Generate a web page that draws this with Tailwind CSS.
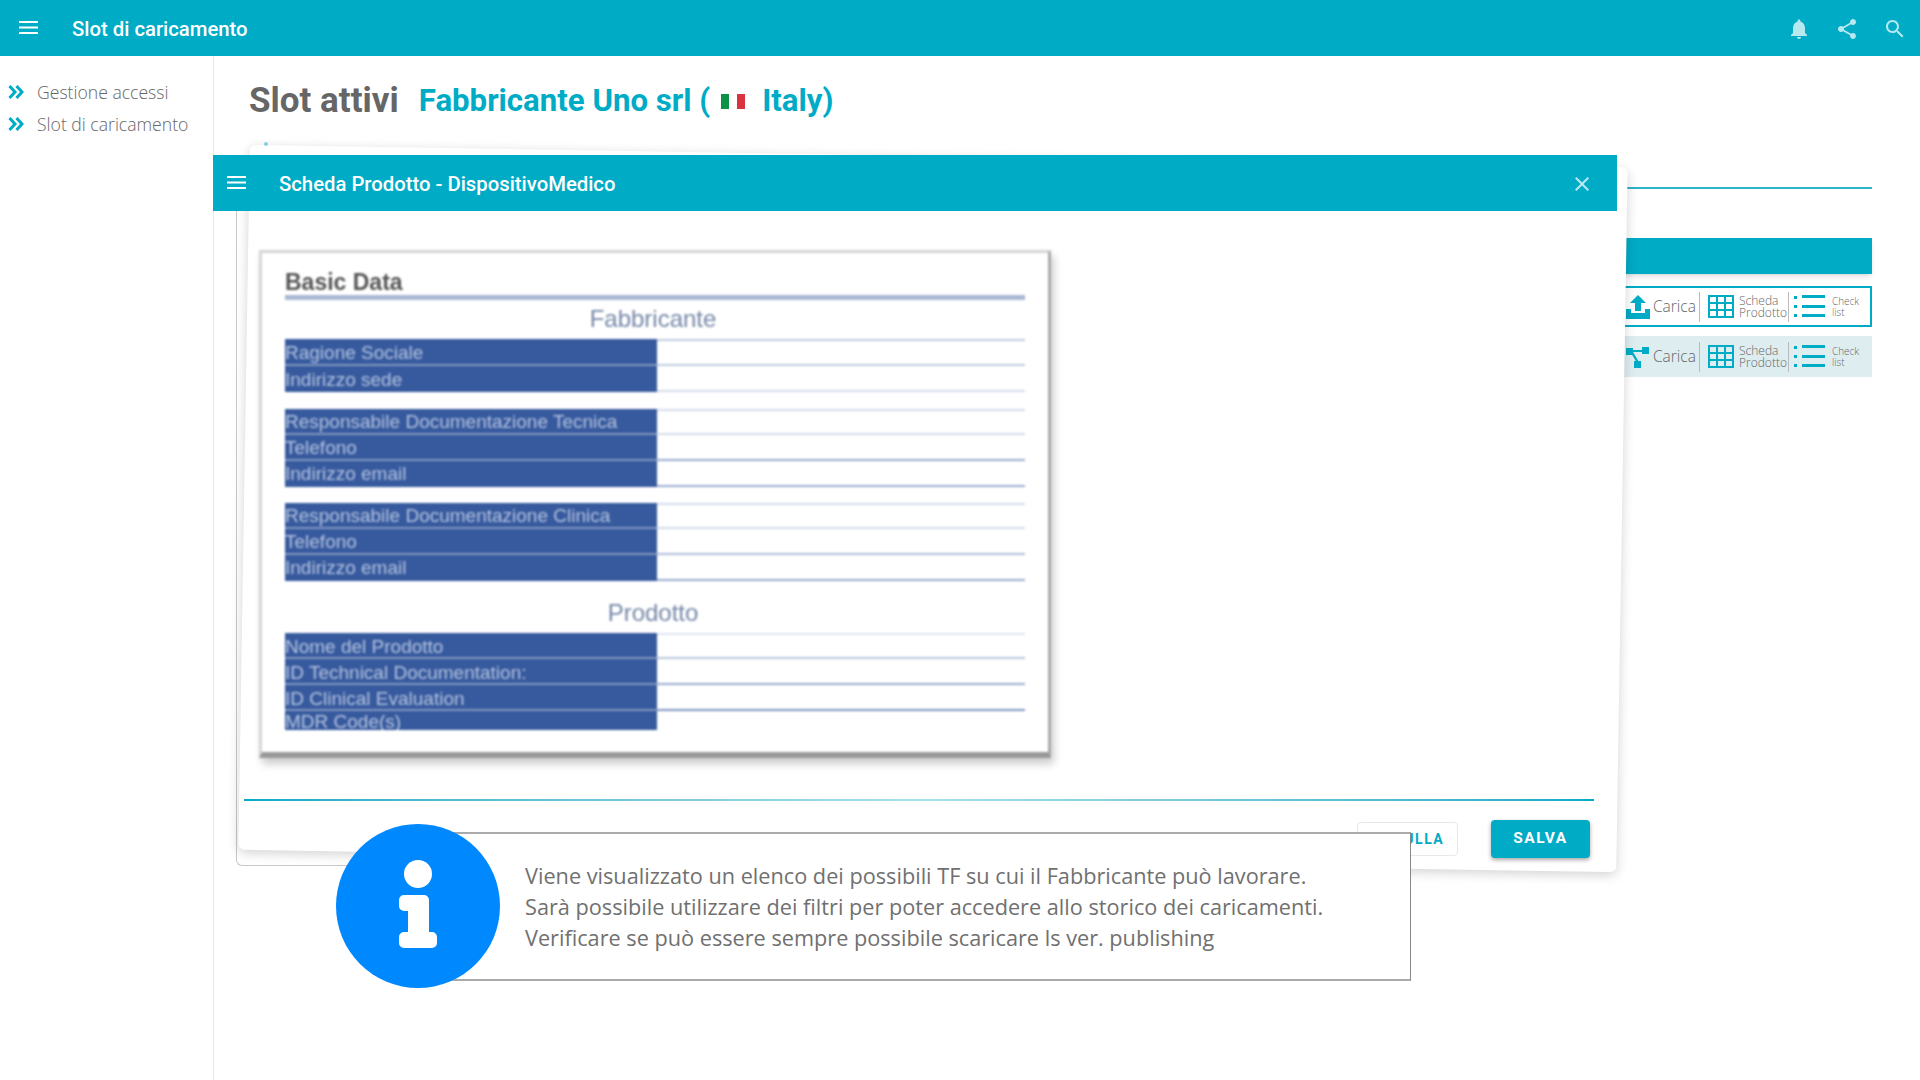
<!DOCTYPE html>
<html lang="it">
<head>
  <meta charset="UTF-8" />
  <title>Slot di caricamento</title>
  <script src="https://cdn.jsdelivr.net/npm/@tailwindcss/browser@4"></script>
</head>
<body class="relative h-screen overflow-hidden bg-white text-[#666] font-['Roboto',sans-serif]">

  <!-- Header -->
  <header class="h-14 bg-[#00abc6] flex items-center text-white">
    <svg class="ml-[19px] w-[19px] h-[13px] mt-[-2px]" viewBox="0 0 19 13" fill="#fff"><path d="M0 0h19v2H0zM0 5.5h19v2H0zM0 11h19v2H0z"/></svg>
    <span class="ml-[34px] mt-[2px] text-[20.3px] font-medium">Slot di caricamento</span>
    <div class="ml-auto mr-[13px] mt-[1px] flex gap-6 text-[#b9e9f0]">
      <svg class="w-6 h-6" viewBox="0 0 24 24" fill="currentColor"><path d="M12 22c1.1 0 2-.9 2-2h-4c0 1.1.89 2 2 2zm6-6v-5c0-3.07-1.64-5.64-4.5-6.32V4c0-.83-.67-1.5-1.5-1.5s-1.5.67-1.5 1.5v.68C7.63 5.36 6 7.92 6 11v5l-2 2v1h16v-1l-2-2z"/></svg>
      <svg class="w-6 h-6" viewBox="0 0 24 24" fill="currentColor"><path d="M18 16.08c-.76 0-1.44.3-1.96.77L8.91 12.7c.05-.23.09-.46.09-.7s-.04-.47-.09-.7l7.05-4.11c.54.5 1.25.81 2.04.81 1.66 0 3-1.34 3-3s-1.34-3-3-3-3 1.34-3 3c0 .24.04.47.09.7L8.04 9.81C7.5 9.31 6.79 9 6 9c-1.66 0-3 1.34-3 3s1.34 3 3 3c.79 0 1.5-.31 2.04-.81l7.12 4.16c-.05.21-.08.43-.08.65 0 1.61 1.31 2.92 2.92 2.92 1.61 0 2.92-1.31 2.92-2.92s-1.31-2.92-2.92-2.92z"/></svg>
      <svg class="w-6 h-6" viewBox="0 0 24 24" fill="currentColor"><path d="M15.5 14h-.79l-.28-.27C15.41 12.59 16 11.11 16 9.5 16 5.91 13.09 3 9.5 3S3 5.91 3 9.5 5.91 16 9.5 16c1.61 0 3.09-.59 4.23-1.57l.27.28v.79l5 4.99L20.49 19l-4.99-5zm-6 0C7.01 14 5 11.99 5 9.5S7.01 5 9.5 5 14 7.01 14 9.5 11.99 14 9.5 14z"/></svg>
    </div>
  </header>

  <div class="flex h-[1024px]">
    <!-- Sidebar -->
    <aside class="w-[214px] shrink-0 border-r border-[#e8e8e8] pt-[20px] font-['Open_Sans',sans-serif] font-light text-[17.6px] text-[#666]">
      <div class="flex items-center h-8">
        <svg class="ml-2 w-[16px] h-[14px]" viewBox="0 0 16 14" fill="none" stroke="#00abc6" stroke-width="3"><path d="M1.5 1l5.5 6-5.5 6M8.5 1l5.5 6-5.5 6"/></svg>
        <span class="ml-[13px]">Gestione accessi</span>
      </div>
      <div class="flex items-center h-8">
        <svg class="ml-2 w-[16px] h-[14px]" viewBox="0 0 16 14" fill="none" stroke="#00abc6" stroke-width="3"><path d="M1.5 1l5.5 6-5.5 6M8.5 1l5.5 6-5.5 6"/></svg>
        <span class="ml-[13px]">Slot di caricamento</span>
      </div>
    </aside>

    <!-- Main -->
    <main class="flex-1 pl-[35px] pr-12 pt-[24px]">
      <div class="flex items-center h-[42px] font-bold">
        <span class="text-[35px] text-[#666]">Slot attivi</span>
        <span class="ml-5 text-[31.2px] text-[#00abc6] flex items-center">Fabbricante Uno srl (
          <span class="ml-[11px] mr-[17px] flex w-6 h-[15px]"><span class="flex-1 bg-[#0b9247]"></span><span class="flex-1 bg-white"></span><span class="flex-1 bg-[#d8333f]"></span></span>
          Italy)</span>
      </div>
      <div class="mt-[65px] h-[2px] bg-[#2fb3c9]"></div>
      <div class="mt-[49px] h-9 bg-[#00abc6] shadow-md"></div>

      <div class="mt-3 h-[41px] border-2 border-[#00abc6] flex items-center justify-end font-['Open_Sans',sans-serif] font-light text-[#666]">
        <svg class="w-6 h-6 mr-[3px]" viewBox="0 0 24 24" fill="#00abc6"><path d="M12 0l8 8h-5v8H9V8H4zM0 14h5v4h14v-4h5v10H0z"/></svg>
        <span class="text-[15.5px] w-[46px]">Carica</span>
        <div class="w-px h-[30px] bg-[#bbb] mr-[8px]"></div>
        <svg class="w-[26px] h-[23px] mr-[5px]" viewBox="0 0 26 23" fill="none" stroke="#00abc6" stroke-width="2"><path d="M1 1h24v21H1zM1 8h24M1 15h24M9 1v21M17 1v21"/></svg>
        <span class="text-[12px] leading-[12px] w-[49px]">Scheda Prodotto</span>
        <div class="w-px h-[30px] bg-[#bbb] mr-[5px]"></div>
        <svg class="w-[31px] h-[23px] mr-[7px]" viewBox="0 0 31 23" fill="#00abc6"><path d="M0 1h3v3H0zM0 10h3v3H0zM0 19h3v3H0zM8 0h23v3H8zM8 10h23v3H8zM8 19h23v3H8z"/></svg>
        <span class="text-[10px] leading-[11px] w-[38px]">Check list</span>
      </div>

      <div class="mt-[9px] h-[41px] bg-[#deedf0] flex items-center justify-end font-['Open_Sans',sans-serif] font-light text-[#666] px-[2px]">
        <svg class="w-6 h-6 mr-[3px]" viewBox="0 0 24 24" fill="#00abc6"><path d="M0 3h7v7H0zM16 2h7v7h-7zM8 16h7v7H8z"/><path d="M6 5h11v2H6zM5 8l2-1 6 10-2 1z"/></svg>
        <span class="text-[15.5px] w-[46px]">Carica</span>
        <div class="w-px h-[30px] bg-[#bbb] mr-[8px]"></div>
        <svg class="w-[26px] h-[23px] mr-[5px]" viewBox="0 0 26 23" fill="none" stroke="#00abc6" stroke-width="2"><path d="M1 1h24v21H1zM1 8h24M1 15h24M9 1v21M17 1v21"/></svg>
        <span class="text-[12px] leading-[12px] w-[49px]">Scheda Prodotto</span>
        <div class="w-px h-[30px] bg-[#bbb] mr-[5px]"></div>
        <svg class="w-[31px] h-[23px] mr-[7px]" viewBox="0 0 31 23" fill="#00abc6"><path d="M0 1h3v3H0zM0 10h3v3H0zM0 19h3v3H0zM8 0h23v3H8zM8 10h23v3H8zM8 19h23v3H8z"/></svg>
        <span class="text-[10px] leading-[11px] w-[38px]">Check list</span>
      </div>
    </main>
  </div>

  <!-- Modal, caught mid-animation: back cards are slightly rotated -->
  <div class="absolute left-[236px] top-[211px] w-[300px] h-[655px] border-l border-b border-[#c8c8c8] rounded-bl-md bg-white"></div>
  <div class="absolute left-[244px] top-[156px] w-[1378px] h-[705px] rotate-[0.93deg] rounded-md bg-white shadow-[0_3px_12px_rgba(0,0,0,0.18)]"></div>
  <div class="absolute left-[264px] top-[142px] w-[4px] h-[4px] rounded-full bg-[#7fd3e1]"></div>

  <div class="absolute left-[213px] top-[155px] w-[1404px] flex flex-col">
    <div class="h-14 bg-[#00abc6] flex items-center text-white">
      <svg class="ml-[14px] w-[19px] h-[13px] mt-[-2px]" viewBox="0 0 19 13" fill="#fff"><path d="M0 0h19v2H0zM0 5.5h19v2H0zM0 11h19v2H0z"/></svg>
      <span class="ml-[33px] mt-[3px] text-[20.3px] font-medium">Scheda Prodotto - DispositivoMedico</span>
      <svg class="ml-auto mr-[23px] mt-[2px] w-6 h-6 text-[#b9e9f0]" viewBox="0 0 24 24" fill="currentColor"><path d="M19 6.41L17.59 5 12 10.59 6.41 5 5 6.41 10.59 12 5 17.59 6.41 19 12 13.41 17.59 19 19 17.59 13.41 12z"/></svg>
    </div>

    <!-- Blurred document picture -->
    <div class="ml-[46px] mt-[39px] w-[792px] h-[508px] bg-white border-[3px] border-[#d6d6d6] border-r-[#aaa] border-b-[6px] border-b-[#999] shadow-[3px_6px_8px_rgba(0,0,0,0.2)] px-[23px] blur-[1.1px] font-['Liberation_Sans',sans-serif] text-[19px] text-[#b4c3df]">
      <div class="h-[47px] flex items-end pb-[1px] border-b-[5px] border-[#a9b8d4] text-[23px] font-bold text-[#555]"><span class="leading-none">Basic Data</span></div>
      <div class="h-[39px] pr-[4px] pb-[2px] flex items-center justify-center text-[24px] text-[#7587a8]">Fabbricante</div>

      <div class="flex flex-col">
        <div class="flex h-[27px]"><div class="w-[372px] bg-[#375a9e] border-b-2 border-[#8096c0] leading-[27px]">Ragione Sociale</div><div class="flex-1 border-y-2 border-[#c0cce2]"></div></div>
        <div class="flex h-[26px]"><div class="w-[372px] bg-[#375a9e] leading-[27px]">Indirizzo sede</div><div class="flex-1 border-b-2 border-[#d5dcea]"></div></div>
      </div>
      <div class="flex flex-col mt-[17px]">
        <div class="flex h-[26px]"><div class="w-[372px] bg-[#375a9e] border-b-2 border-[#8096c0] leading-[25px]">Responsabile Documentazione Tecnica</div><div class="flex-1 border-y-2 border-[#d5dcea]"></div></div>
        <div class="flex h-[26px]"><div class="w-[372px] bg-[#375a9e] border-b-2 border-[#8096c0] leading-[25px]">Telefono</div><div class="flex-1 border-b-2 border-[#9cadcf]"></div></div>
        <div class="flex h-[26px]"><div class="w-[372px] bg-[#375a9e] leading-[26px]">Indirizzo email</div><div class="flex-1 border-b-2 border-[#9cadcf]"></div></div>
      </div>
      <div class="flex flex-col mt-[16px]">
        <div class="flex h-[26px]"><div class="w-[372px] bg-[#375a9e] border-b-2 border-[#8096c0] leading-[25px]">Responsabile Documentazione Clinica</div><div class="flex-1 border-y-2 border-[#d5dcea]"></div></div>
        <div class="flex h-[26px]"><div class="w-[372px] bg-[#375a9e] border-b-2 border-[#8096c0] leading-[25px]">Telefono</div><div class="flex-1 border-b-2 border-[#aebddb]"></div></div>
        <div class="flex h-[26px]"><div class="w-[372px] bg-[#375a9e] leading-[26px]">Indirizzo email</div><div class="flex-1 border-b-2 border-[#9cadcf]"></div></div>
      </div>
      <div class="h-[52px] pt-3 pr-[4px] flex items-center justify-center text-[24px] text-[#7587a8]">Prodotto</div>
      <div class="flex flex-col">
        <div class="flex h-[26px]"><div class="w-[372px] bg-[#375a9e] border-b-2 border-[#8096c0] leading-[27px]">Nome del Prodotto</div><div class="flex-1 border-y-2 border-[#dfe4ef] border-b-[#b9c6df]"></div></div>
        <div class="flex h-[26px]"><div class="w-[372px] bg-[#375a9e] border-b-2 border-[#8096c0] leading-[27px]">ID Technical Documentation:</div><div class="flex-1 border-b-2 border-[#9cadcf]"></div></div>
        <div class="flex h-[26px]"><div class="w-[372px] bg-[#375a9e] border-b-2 border-[#8096c0] leading-[27px]">ID Clinical Evaluation</div><div class="flex-1 border-b-2 border-[#7f96c3]"></div></div>
        <div class="flex h-[19px] overflow-hidden"><div class="w-[372px] bg-[#375a9e] leading-[22px]">MDR Code(s)</div></div>
      </div>
    </div>

    <!-- Footer of the modal -->
    <div class="ml-[31px] mr-[23px] mt-[41px] h-[2px] bg-linear-to-r from-[#00abc6] via-[#a6e0ea] to-[#00abc6]"></div>
    <div class="mt-[19px] flex justify-end items-center mr-[27px] gap-[33px]">
      <button class="w-[101px] h-[34px] rounded border border-[#e8e8e8] text-[14px] font-bold tracking-[1.5px] text-[#00abc6]">ANNULLA</button>
      <button class="w-[99px] h-[38px] rounded bg-[#00abc6] text-[15.5px] font-bold tracking-[1.5px] text-white shadow-[0_2px_4px_rgba(0,0,0,0.35)]">SALVA</button>
    </div>
  </div>

  <!-- Tooltip box -->
  <div class="absolute left-[420px] top-[832px] w-[991px] h-[149px] bg-white border-y-2 border-[#aaa] border-r border-r-[#888] flex items-center pl-[105px] font-['Open_Sans',sans-serif] text-[21.7px] leading-[31px] text-[#707070]">
    <p>Viene visualizzato un elenco dei possibili TF su cui il Fabbricante può lavorare.<br>Sarà possibile utilizzare dei filtri per poter accedere allo storico dei caricamenti.<br>Verificare se può essere sempre possibile scaricare ls ver. publishing</p>
  </div>
  <div class="absolute left-[336px] top-[824px] w-[164px] h-[164px] rounded-full bg-[#0088ff] flex items-center justify-center">
    <svg class="w-[164px] h-[164px]" viewBox="0 0 164 164" fill="#fff"><circle cx="82" cy="50" r="14"/><path d="M68 71h20a5 5 0 0 1 5 5v32h3a5 5 0 0 1 5 5v6a5 5 0 0 1-5 5H68a5 5 0 0 1-5-5v-6a5 5 0 0 1 5-5h4V87h-4a5 5 0 0 1-5-5v-6a5 5 0 0 1 5-5z"/></svg>
  </div>
</body>
</html>
